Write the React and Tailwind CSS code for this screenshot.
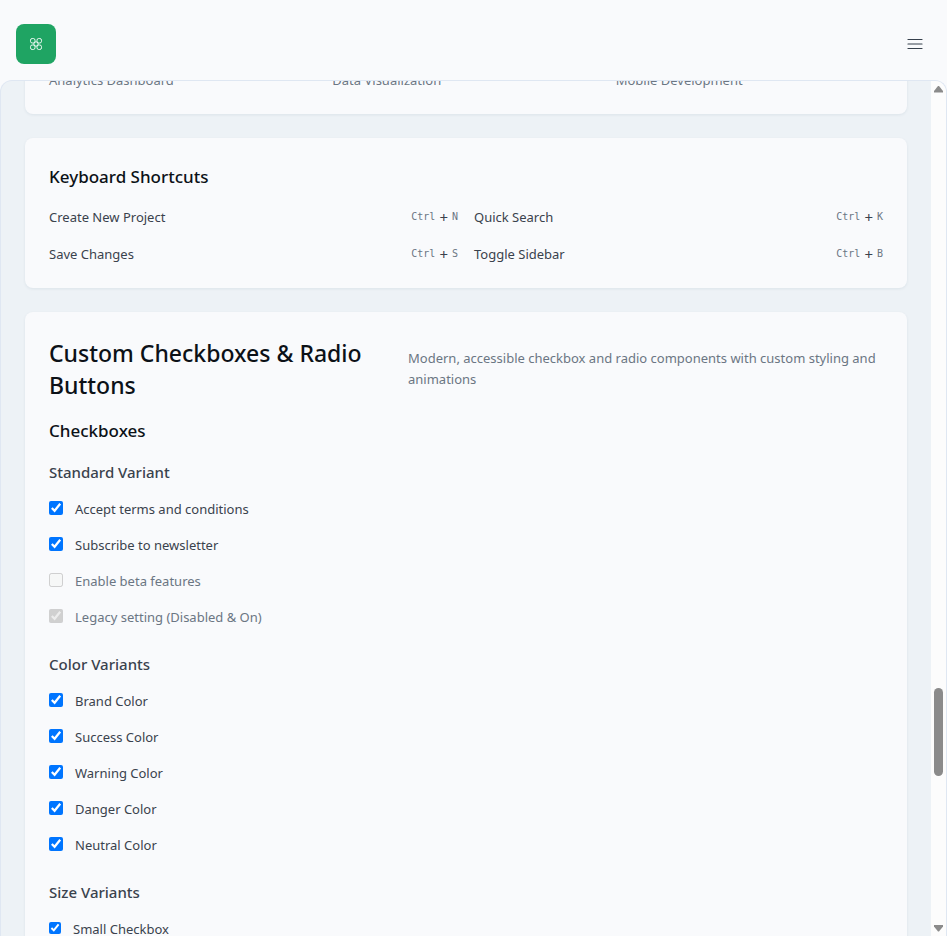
import React from "react";

const recentSkills = ["Analytics Dashboard", "Data Visualization", "Mobile Development"];

const shortcuts = [
  { label: "Create New Project", key: "N" },
  { label: "Quick Search", key: "K" },
  { label: "Save Changes", key: "S" },
  { label: "Toggle Sidebar", key: "B" },
];

const groups = [
  {
    title: "Standard Variant",
    items: [
      { id: "terms", label: "Accept terms and conditions", checked: true },
      { id: "newsletter", label: "Subscribe to newsletter", checked: true },
      { id: "beta", label: "Enable beta features", disabled: true },
      { id: "legacy", label: "Legacy setting (Disabled & On)", checked: true, disabled: true },
    ],
  },
  {
    title: "Color Variants",
    items: [
      { id: "brand", label: "Brand Color", checked: true },
      { id: "success", label: "Success Color", checked: true },
      { id: "warning", label: "Warning Color", checked: true },
      { id: "danger", label: "Danger Color", checked: true },
      { id: "neutral", label: "Neutral Color", checked: true },
    ],
  },
  {
    title: "Size Variants",
    items: [{ id: "small", label: "Small Checkbox", checked: true, small: true }],
  },
];

function Logo() {
  return (
    <a
      href="#home"
      aria-label="Home"
      className="flex size-10 items-center justify-center rounded-lg bg-[#1fa463] text-white"
    >
      <svg viewBox="0 0 14 14" className="size-3.5" fill="none" stroke="currentColor" strokeWidth="0.9">
        <rect x="1.5" y="1.5" width="4.500" height="4.500" rx="1.700" />
        <rect x="8" y="1.5" width="4.500" height="4.500" rx="1.700" />
        <rect x="1.5" y="8" width="4.500" height="4.500" rx="1.700" />
        <rect x="8" y="8" width="4.500" height="4.500" rx="1.700" />
        <circle cx="7" cy="7" r="2.2" />
      </svg>
    </a>
  );
}

function Card({ className = "", children }) {
  return (
    <section
      className={`shrink-0 rounded-lg bg-[#f9fafc] px-6 pt-[25px] pb-[23px] shadow-[0_1px_3px_rgba(30,60,90,0.08)] ${className}`}
    >
      {children}
    </section>
  );
}

function Key({ children }) {
  return (
    <kbd className="pb-0.5 font-['DejaVu_Sans_Mono',monospace] text-[10px] text-[#6b7683]">{children}</kbd>
  );
}

function Check({ item }) {
  return (
    <div className="flex h-6 items-center gap-3">
      <input
        id={item.id}
        type="checkbox"
        defaultChecked={item.checked}
        disabled={item.disabled}
        className={item.small ? "size-3" : "size-3.5"}
      />
      <label htmlFor={item.id} className={`pt-0.5 ${item.disabled ? "text-[#6b7683]" : "text-[#3a424d]"}`}>
        {item.label}
      </label>
    </div>
  );
}

function Scrollbar() {
  return (
    <div aria-hidden="true" className="flex w-[15px] shrink-0 flex-col items-center bg-[#fcfcfc] pt-1 pb-1">
      <svg viewBox="0 0 9 8" className="h-2 w-[9px]" fill="#8b8b8b">
        <path d="M4 1h1l4 5v1.500H0V6z" />
      </svg>
      <div className="grow-[596]" />
      <div className="h-[88px] w-[9px] rounded-full bg-[#8b8b8b]" />
      <div className="grow-[148]" />
      <svg viewBox="0 0 9 8" className="h-2 w-[9px]" fill="#8b8b8b">
        <path d="M4 7.500h1l4-5V1H0v1.500z" />
      </svg>
    </div>
  );
}

export default function App() {
  return (
    <div className="flex h-screen flex-col overflow-hidden bg-[#f9fafc] font-['Noto_Sans','Open_Sans',sans-serif] text-[13px] leading-[21px] text-[#3a424d]">
      <header className="flex h-20 shrink-0 items-center justify-between px-4 pt-2">
        <Logo />
        <button type="button" aria-label="Open menu" className="flex size-8 items-center justify-center text-[#36404c]">
          <svg viewBox="0 0 16 12" className="h-3 w-4" fill="none" stroke="currentColor" strokeWidth="1.2" strokeLinecap="round">
            <path d="M1 1.500h14M1 6h14M1 10.500h14" />
          </svg>
        </button>
      </header>

      <div className="flex min-h-0 grow overflow-hidden rounded-t-xl border border-b-0 border-[#dfe7f2] bg-[#edf2f6]">
        <main className="flex min-w-0 grow flex-col gap-6 overflow-hidden px-6">
          <Card className="-mt-9">
            <ul className="grid grid-cols-3 gap-4 text-[#6b7683]">
              {recentSkills.map((skill) => (
                <li key={skill}>{skill}</li>
              ))}
            </ul>
          </Card>

          <Card>
            <h2 className="mb-4 text-[17px] leading-7 font-medium text-[#0c1117]">Keyboard Shortcuts</h2>
            <ul className="grid grid-cols-2 gap-4">
              {shortcuts.map((s) => (
                <li key={s.label} className="flex items-center justify-between">
                  <span>{s.label}</span>
                  <span className="flex h-5 items-center gap-1">
                    <Key>Ctrl</Key>
                    <span className="text-[15px]">+</span>
                    <Key>{s.key}</Key>
                  </span>
                </li>
              ))}
            </ul>
          </Card>

          <Card>
            <div className="flex items-center gap-4">
              <h2 className="w-[343px] shrink-0 text-[23px] leading-8 font-medium text-[#0c1117]">
                Custom Checkboxes &amp; Radio Buttons
              </h2>
              <p className="text-[#6b7683]">
                Modern, accessible checkbox and radio components with custom styling and animations
              </p>
            </div>
            <h3 className="mt-4 text-[17px] leading-7 font-medium text-[#0c1117]">Checkboxes</h3>
            <div className="mt-[15px] flex flex-col gap-6">
              {groups.map((g) => (
                <fieldset key={g.title}>
                  <legend className="text-[15px] leading-6 font-medium">{g.title}</legend>
                  <div className="mt-3 flex flex-col gap-3">
                    {g.items.map((item) => (
                      <Check key={item.id} item={item} />
                    ))}
                  </div>
                </fieldset>
              ))}
            </div>
          </Card>
        </main>
        <Scrollbar />
      </div>
    </div>
  );
}
